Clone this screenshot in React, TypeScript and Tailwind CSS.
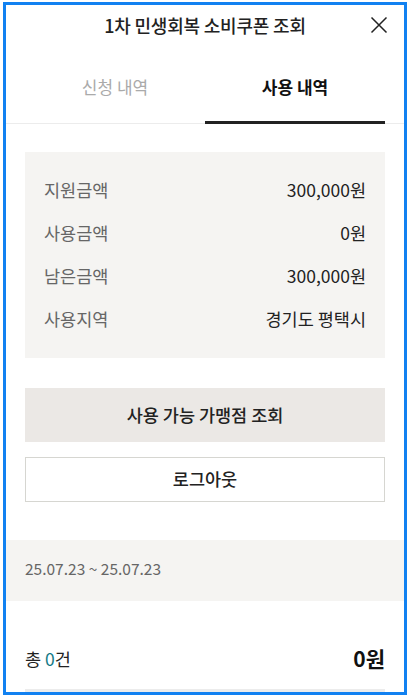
import { useState } from 'react';

const summary = [
  { label: '지원금액', value: '300,000원' },
  { label: '사용금액', value: '0원' },
  { label: '남은금액', value: '300,000원' },
  { label: '사용지역', value: '경기도 평택시' },
];

export default function App() {
  const [tab, setTab] = useState<'apply' | 'use'>('use');

  return (
    <div
      className="w-[409px] h-[698px] bg-white pt-[2px] pl-[3px]"
      style={{ fontFamily: '"Noto Sans CJK KR", "Noto Sans", sans-serif' }}
    >
      <div className="w-[404px] h-[693px] border-[3px] border-[#1181f1] overflow-hidden flex flex-col bg-white">
        {/* Header */}
        <header className="relative h-[40px] flex items-center justify-center shrink-0">
          <h1 className="text-[18px] font-medium text-[#222] tracking-[-0.2px]">1차 민생회복 소비쿠폰 조회</h1>
          <button className="absolute right-[16px] top-1/2 -translate-y-1/2 text-[#222]">
            <svg width="18" height="18" viewBox="0 0 18 18" fill="none" stroke="currentColor" strokeWidth="1.5">
              <path d="M1.5 1.5 L16.5 16.5 M16.5 1.5 L1.5 16.5" />
            </svg>
          </button>
        </header>

        {/* Tabs */}
        <div className="border-b border-[#ececec] px-[19px] shrink-0">
          <div className="flex -mb-px">
            <button
              onClick={() => setTab('apply')}
              className={`flex-1 h-[79px] pt-[8px] flex items-center justify-center text-[17px] border-b-[3px] ${
                tab === 'apply' ? 'border-[#222] text-[#111] font-bold' : 'border-transparent text-[#aaa]'
              }`}
            >
              신청 내역
            </button>
            <button
              onClick={() => setTab('use')}
              className={`flex-1 h-[79px] pt-[8px] flex items-center justify-center text-[17px] border-b-[3px] ${
                tab === 'use' ? 'border-[#222] text-[#111] font-bold' : 'border-transparent text-[#aaa]'
              }`}
            >
              사용 내역
            </button>
          </div>
        </div>

        {/* Summary */}
        <div className="px-[19px] pt-[28px]">
          <div className="bg-[#f5f4f2] px-[19px] pt-[17px] pb-[17px]">
            {summary.map((row) => (
              <div key={row.label} className="h-[43px] flex items-center justify-between text-[17.5px]">
                <span className="text-[#666]">{row.label}</span>
                <span className="text-[#222]">{row.value}</span>
              </div>
            ))}
          </div>

          <button className="mt-[30px] w-full h-[54px] bg-[#ebe8e5] text-[17.5px] font-medium text-[#222]">
            사용 가능 가맹점 조회
          </button>
          <button className="mt-[15px] w-full h-[45px] bg-white border border-[#d6d6d1] text-[17.5px] font-medium text-[#222]">
            로그아웃
          </button>
        </div>

        {/* Period */}
        <div className="mt-[38px] h-[61px] bg-[#f5f4f2] px-[19px] pb-[3px] flex items-center shrink-0">
          <span className="text-[15.5px] text-[#666]">25.07.23 ~ 25.07.23</span>
        </div>

        {/* Total */}
        <div className="px-[19px] pt-[46px]">
          <div className="h-[24px] flex items-center justify-between">
            <span className="text-[17.5px] text-[#222]">
              총 <span className="text-[#137a86]">0</span>건
            </span>
            <span className="text-[21px] font-bold text-[#111]">0원</span>
          </div>
          <div className="mt-[18px] h-[40px] bg-[#ececec]" />
        </div>
      </div>
    </div>
  );
}
